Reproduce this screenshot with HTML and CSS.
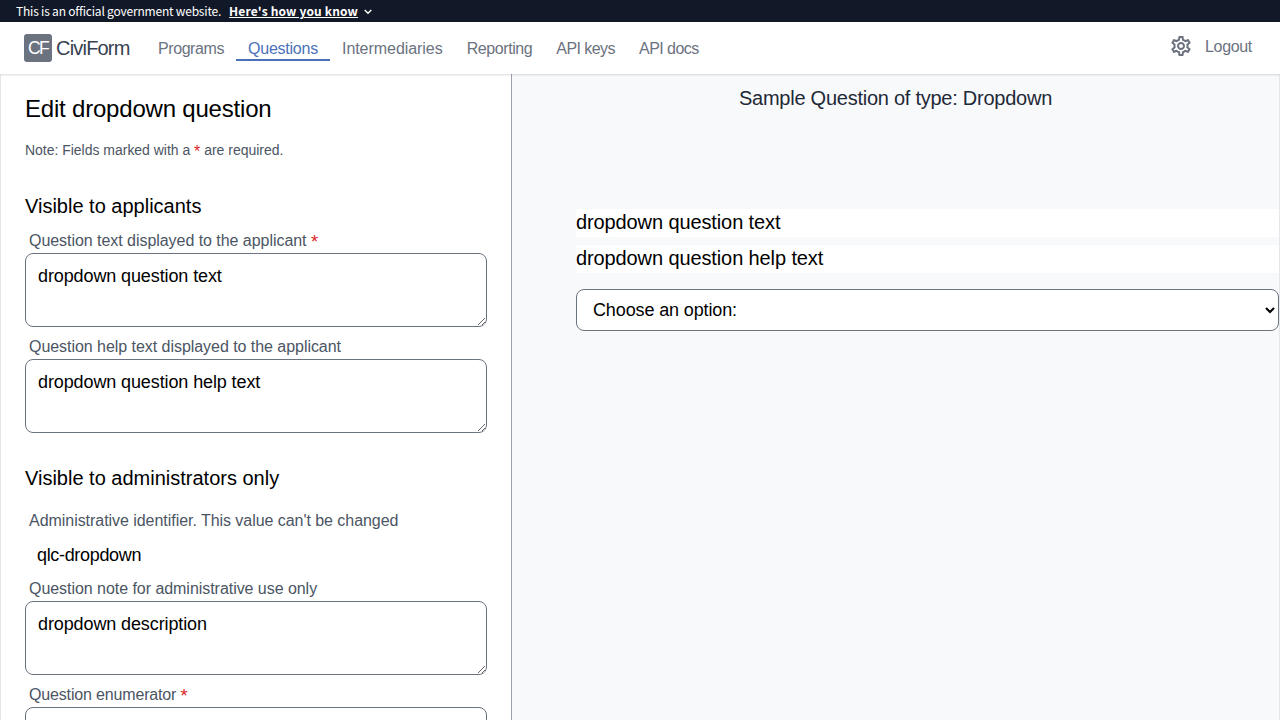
FILE: index.html
```html
<!DOCTYPE html>
<html lang="en">
<head>
<meta charset="utf-8">
<title>Edit dropdown question</title>
<link rel="stylesheet" href="styles.css">
</head>
<body>
<div class="banner">
  <span>This is an official government website.</span>
  <a class="banner-link">Here's how you know</a>
  <svg class="banner-chevron" width="8" height="6" viewBox="0 0 8 6" fill="none" stroke="currentColor" stroke-width="1.4"><path d="M.7 1 4 4.3 7.3 1"/></svg>
</div>
<header class="header">
  <div class="logo">CF</div>
  <div class="brand">CiviForm</div>
  <nav class="nav">
    <a class="nav-programs">Programs</a>
    <a class="nav-questions active">Questions</a>
    <a class="nav-intermediaries">Intermediaries</a>
    <a class="nav-reporting">Reporting</a>
    <a class="nav-keys">API keys</a>
    <a class="nav-docs">API docs</a>
  </nav>
  <div class="account">
    <svg class="gear" width="24" height="24" viewBox="0 0 24 24" fill="currentColor"><path d="M19.43 12.98c.04-.32.07-.64.07-.98 0-.34-.03-.66-.07-.98l2.11-1.65c.19-.15.24-.42.12-.64l-2-3.46c-.09-.16-.26-.25-.44-.25-.06 0-.12.01-.17.03l-2.49 1c-.52-.4-1.08-.73-1.69-.98l-.38-2.65C14.46 2.18 14.25 2 14 2h-4c-.25 0-.46.18-.49.42l-.38 2.65c-.61.25-1.17.59-1.69.98l-2.49-1c-.06-.02-.12-.03-.18-.03-.17 0-.34.09-.43.25l-2 3.46c-.13.22-.07.49.12.64l2.11 1.65c-.04.32-.07.65-.07.98 0 .33.03.66.07.98l-2.11 1.65c-.19.15-.24.42-.12.64l2 3.46c.09.16.26.25.44.25.06 0 .12-.01.17-.03l2.49-1c.52.4 1.08.73 1.69.98l.38 2.65c.03.24.24.42.49.42h4c.25 0 .46-.18.49-.42l.38-2.65c.61-.25 1.17-.59 1.69-.98l2.49 1c.06.02.12.03.18.03.17 0 .34-.09.43-.25l2-3.46c.12-.22.07-.49-.12-.64l-2.11-1.65zm-1.98-1.71c.04.31.05.52.05.73 0 .21-.02.43-.05.73l-.14 1.13.89.7 1.08.84-.7 1.21-1.27-.51-1.04-.42-.9.68c-.43.32-.84.56-1.25.73l-1.06.43-.16 1.13-.2 1.35h-1.4l-.19-1.35-.16-1.13-1.06-.43c-.43-.18-.83-.41-1.23-.71l-.91-.7-1.06.43-1.27.51-.7-1.21 1.08-.84.89-.7-.14-1.13c-.03-.31-.05-.54-.05-.74s.02-.43.05-.73l.14-1.13-.89-.7-1.08-.84.7-1.21 1.27.51 1.04.42.9-.68c.43-.32.84-.56 1.25-.73l1.06-.43.16-1.13.2-1.35h1.39l.19 1.35.16 1.13 1.06.43c.43.18.83.41 1.23.71l.91.7 1.06-.43 1.27-.51.7 1.21-1.07.85-.89.7.14 1.13zM12 8c-2.21 0-4 1.79-4 4s1.79 4 4 4 4-1.79 4-4-1.79-4-4-4zm0 6c-1.1 0-2-.9-2-2s.9-2 2-2 2 .9 2 2-.9 2-2 2z"/></svg>
    <a class="logout">Logout</a>
  </div>
</header>
<main class="workspace">
  <form class="editor">
    <h1>Edit dropdown question</h1>
    <p class="note">Note: Fields marked with a <b>*</b> are required.</p>
    <h2>Visible to applicants</h2>
    <label for="question-text">Question text displayed to the applicant <b>*</b></label>
    <textarea id="question-text">dropdown question text</textarea>
    <label for="help-text">Question help text displayed to the applicant</label>
    <textarea id="help-text">dropdown question help text</textarea>
    <h2 class="admin-title">Visible to administrators only</h2>
    <div class="field-name">Administrative identifier. This value can't be changed</div>
    <div class="identifier">qlc-dropdown</div>
    <label for="admin-note">Question note for administrative use only</label>
    <textarea id="admin-note">dropdown description</textarea>
    <label class="tight" for="enumerator">Question enumerator <b>*</b></label>
    <textarea id="enumerator"></textarea>
  </form>
  <section class="preview">
    <h2 class="preview-title">Sample Question of type: Dropdown</h2>
    <div class="sample">
      <div class="sample-text">dropdown question text</div>
      <div class="sample-text">dropdown question help text</div>
      <select><option>Choose an option:</option></select>
    </div>
  </section>
</main>
</body>
</html>
```
FILE: styles.css
```css
* { box-sizing: border-box; }
body { margin: 0; height: 720px; overflow: hidden; display: flex; flex-direction: column; font-family: "Liberation Sans", Arial, sans-serif; color: #000; background: #f8f9fb; }
.banner { height: 22px; flex: none; display: flex; align-items: center; padding: 0 16px; background: #111827; color: #fff; font: 12px/22px "Noto Sans CJK SC", sans-serif; white-space: nowrap; letter-spacing: -.2px; }
.banner-link { margin-left: 8px; font-weight: 700; text-decoration: underline; letter-spacing: .16px; }
.banner-chevron { margin: 2px 0 0 6px; }
.header { position: relative; z-index: 1; height: 52px; flex: none; display: flex; padding: 12px 28px 0 24px; background: #fff; box-shadow: 0 1px 2px rgba(0,0,0,.15); color: #6b7280; white-space: nowrap; }
.logo { width: 28px; height: 28px; border-radius: 3px; background: #6b7280; color: #fff; font-size: 17.5px; line-height: 29px; padding-left: 4px; letter-spacing: -1.6px; }
.brand { width: 90px; padding-left: 4px; color: #374151; font-size: 20px; line-height: 28px; letter-spacing: -.8px; }
.nav { display: flex; margin: 2px 0 0 4px; }
.nav a { height: 25px; padding: 0 12px; font-size: 16px; line-height: 26px; }
.nav .active { color: #4a70b8; border-bottom: 2px solid #4a70b8; }
.nav-programs, .nav-reporting { letter-spacing: -.42px; }
.nav-questions { letter-spacing: -.23px; }
.nav-intermediaries { letter-spacing: -.05px; }
.nav-keys, .nav-docs { letter-spacing: -.55px; }
.account { display: flex; margin-left: auto; }
.logout { margin-left: 12px; font-size: 16px; line-height: 25px; letter-spacing: -.33px; }
.workspace { flex: 1; display: flex; min-height: 0; border: solid #e5e7eb; border-width: 0 1px; }
.editor { width: 511px; flex: none; display: flex; flex-direction: column; padding: 19px 24px 0; background: #fff; border-right: 1px solid #9ca3af; overflow: hidden; }
.editor > * { flex: none; }
h1, h2, p { margin: 0; font-weight: 400; white-space: nowrap; }
h1 { height: 32px; font-size: 24px; line-height: 32px; letter-spacing: -.2px; }
h2 { height: 28px; font-size: 20px; line-height: 26px; }
b { position: relative; top: 2px; font-weight: 400; font-size: 1.15em; line-height: 0; color: #dc2626; }
.note { height: 20px; margin: 16px 0 32px; font-size: 14px; line-height: 18px; color: #4b5563; letter-spacing: -.02px; }
label, .field-name { padding: 0 4px; height: 24px; margin-top: 8px; font-size: 16px; line-height: 24px; color: #4b5563; white-space: nowrap; letter-spacing: -.045px; }
.tight { letter-spacing: -.16px; }
textarea { display: block; width: 462px; height: 74px; margin: 0; padding: 8px 12px; border: 1px solid #6b7280; border-radius: 8px; background: #fff; color: #000; font: 18px/28px "Liberation Sans", Arial, sans-serif; letter-spacing: -.11px; overflow: hidden; }
.admin-title { margin-top: 32px; }
.field-name { margin-top: 16px; }
.identifier { padding: 8px 12px 0; height: 36px; font-size: 18px; line-height: 28px; letter-spacing: -.33px; }
.preview { flex: 1; min-width: 0; }
.preview-title { height: 39px; padding-top: 11px; text-align: center; color: #1f2937; letter-spacing: -.25px; }
.sample { display: flex; flex-direction: column; gap: 8px; padding: 96px 0 0 64px; }
.sample-text { height: 28px; background: #fff; font-size: 20px; line-height: 26px; letter-spacing: -.11px; }
select { width: 100%; height: 42px; margin: 8px 0 0; padding: 0 0 0 12px; border: 1px solid #6b7280; border-radius: 8px; background: #fff; color: #000; font: 18px "Liberation Sans", Arial, sans-serif; letter-spacing: -.13px; }
```
